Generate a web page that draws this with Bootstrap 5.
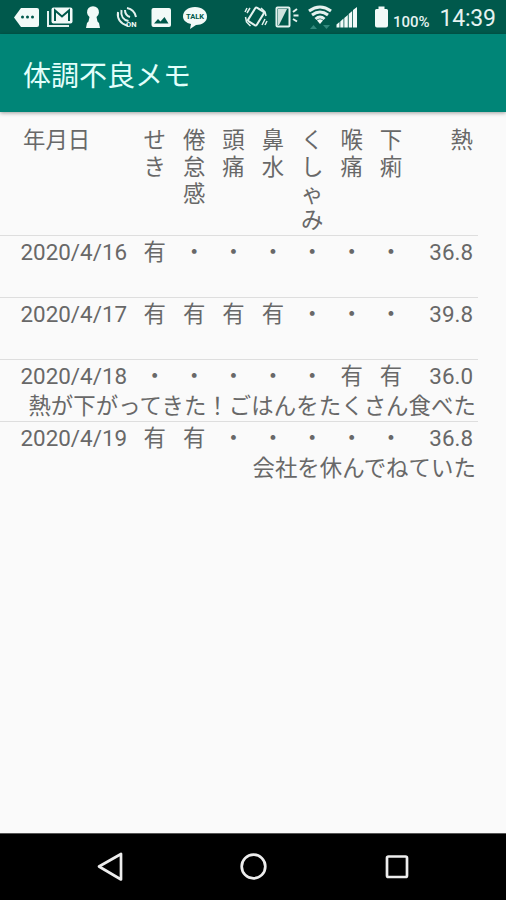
<!DOCTYPE html>
<html lang="ja">
<head>
<meta charset="utf-8">
<meta name="viewport" content="width=device-width, initial-scale=1">
<title>体調不良メモ</title>
<link rel="stylesheet" href="https://cdn.jsdelivr.net/npm/bootstrap@5.3.0/dist/css/bootstrap.min.css">
<style>
  body { font-family: Roboto, "Noto Sans CJK JP", sans-serif; background: #fafafa; color: #686868; height: 900px; overflow: hidden; }
  .status-bar { height: 34px; background: #00594c; color: #e6f3f1; }
  .status-bar svg { height: 34px; flex: none; fill: #f2faf8; stroke: none; }
  .status-bar .ln { fill: none; stroke: #e4f2ef; stroke-width: 2; }
  .status-bar .dk { fill: #00594c; }
  .battery-text { width: 48.5px; padding: 5px 0 0 2px; font-size: 15px; font-weight: 500; line-height: 34px; }
  .clock { padding-top: 2px; font-size: 23px; line-height: 34px; letter-spacing: -.2px; }
  .app-bar { height: 78px; background: #008577; box-shadow: 0 1px 4px rgba(0,0,0,.38); padding-left: 23px; }
  .app-title { font-size: 28px; line-height: 40px; color: #e2fffb; padding-top: 7px; }
  .memo { font-size: 22.4px; width: 478px; line-height: 31px; }
  .memo-row { height: 62px; border-bottom: 1px solid #dedede; }
  .memo-row:last-child { border-bottom: 0; }
  .cells { display: grid; grid-template-columns: 135px repeat(7, 39.4px) 1fr; text-align: center; }
  .cells > :first-child { text-align: left; padding-left: 20.5px; }
  .cells > :last-child { text-align: right; padding-right: 5px; }
  .memo-head { height: 124px; padding-top: 15px; line-height: 26.8px; border-bottom: 1px solid #dedede; }
  .memo-head > :first-child { padding-left: 23px; }
  .stack { width: 1em; margin: 0 auto; word-break: break-all; line-break: anywhere; }
  .memo-row .cells { padding-top: 1px; line-height: 30px; }
  .note { text-align: right; padding-right: 2px; line-height: 30px; letter-spacing: .08px; }
  .nav-keys { height: 67px; background: #000; border-top: 1px solid #555; }
  .nav-keys svg { fill: none; stroke: #ededed; stroke-width: 2.7; }
</style>
<script src="https://cdn.jsdelivr.net/npm/bootstrap@5.3.0/dist/js/bootstrap.bundle.min.js"></script>
</head>
<body class="d-flex flex-column">
<header class="status-bar d-flex flex-shrink-0">
  <svg width="43" viewBox="0 0 43 34"><path d="M21 8h16q2 0 2 2v15q0 2-2 2H21l-7-9.500z"/><g class="dk"><circle cx="22.500" cy="17" r="1.500"/><circle cx="27.500" cy="17" r="1.500"/><circle cx="32.500" cy="17" r="1.500"/></g></svg>
  <svg width="37" viewBox="43 0 37 34"><path class="ln" d="M48 11v15h21"/><rect x="51.500" y="7.500" width="21" height="16" rx="2"/><path d="M55 21V10.500l7 6 7-6V21" fill="none" stroke="#00594c" stroke-width="2"/></svg>
  <svg width="29" viewBox="80 0 29 34"><path d="M89.500 17a6 6 0 1 1 7 0l1 4.500 1.500 1.500 1 5H86l1-5 1.500-1.500z"/></svg>
  <svg width="36" viewBox="109 0 36 34"><g class="ln"><path d="M118 12c-1 7 3 12 10 14M121.500 10c-1 6 2 10 7 11M125 10c0 4 2 6 5 7M127 8c5 1 8 4 9 9"/></g><text x="126" y="27" font-size="7.500" font-weight="700">ON</text></svg>
  <svg width="32" viewBox="145 0 32 34"><rect x="151.500" y="8" width="19.500" height="19" rx="2"/><path class="dk" d="M154 23.500l4-4.500 2.500 2.500 4-4.500 4 6.500z"/></svg>
  <svg width="62" viewBox="177 0 62 34"><path d="M195 7c7 0 12 4 12 9.500S202 25 196 25l-6 4 1-5c-5-1-8-4-8-7.500C183 11 188 7 195 7z"/><text class="dk" x="186" y="19" font-size="7.500" font-weight="700">TALK</text></svg>
  <svg width="32" viewBox="239 0 32 34"><rect class="ln" x="251" y="8.500" width="10" height="16" rx="1.500" transform="rotate(32 256 16.500)"/><g class="ln" style="stroke-width:1.500"><path d="M250 8l-3 5M247 8l-2 4M245.500 17l1 5 4 4M262 25l3-6M265 25l2-4M261 8l4 4 1 4"/></g></svg>
  <svg width="32" viewBox="271 0 32 34"><rect class="ln" x="276.500" y="7.500" width="13" height="19" rx="1"/><path d="M278 9h9l-8 16h-1z" opacity=".85"/><path class="ln" d="M293 12l4-3M293.500 15.500h5M293 19l4 2.500"/></svg>
  <svg width="31" viewBox="303 0 31 34"><g class="ln" style="stroke-width:3"><path d="M309 11q11-8 22 0M312 15q8-6 16 0M315.500 19q4.500-4 9 0"/></g><path d="M317 20.500q3-2.500 6 0l-3 3.500z"/><path d="M310 29l3.500-4 3.500 4zM323 25h7l-3.500 4z" fill="#32897d"/></svg>
  <svg width="33" viewBox="334 0 33 34"><path d="M336.500 27.500v-3l3-2.500v5.500zM340.300 27.500v-6l3.200-3v9zM344.300 27.500V18l3.500-3v12.500zM348.700 27.500V14l3.500-3v16.500zM353 27.500V10l4-3v20.500z"/></svg>
  <svg width="24" viewBox="367 0 24 34"><path d="M378.500 6.500h6v2.500h2q1.500 0 1.500 1.500v15q0 2-2 2h-9q-2 0-2-2v-15q0-1.500 1.500-1.500h2z"/></svg>
  <span class="battery-text">100%</span>
  <span class="clock">14:39</span>
</header>
<nav class="app-bar d-flex align-items-center flex-shrink-0">
  <h1 class="app-title m-0 fw-normal">体調不良メモ</h1>
</nav>
<main class="flex-grow-1">
  <div class="memo">
    <div class="cells memo-head">
      <div>年月日</div>
      <div><div class="stack">せき</div></div>
      <div><div class="stack">倦怠感</div></div>
      <div><div class="stack">頭痛</div></div>
      <div><div class="stack">鼻水</div></div>
      <div><div class="stack">くしゃみ</div></div>
      <div><div class="stack">喉痛</div></div>
      <div><div class="stack">下痢</div></div>
      <div>熱</div>
    </div>
    <div class="memo-row">
      <div class="cells"><span>2020/4/16</span><span>有</span><span>・</span><span>・</span><span>・</span><span>・</span><span>・</span><span>・</span><span>36.8</span></div>
    </div>
    <div class="memo-row">
      <div class="cells"><span>2020/4/17</span><span>有</span><span>有</span><span>有</span><span>有</span><span>・</span><span>・</span><span>・</span><span>39.8</span></div>
    </div>
    <div class="memo-row">
      <div class="cells"><span>2020/4/18</span><span>・</span><span>・</span><span>・</span><span>・</span><span>・</span><span>有</span><span>有</span><span>36.0</span></div>
      <div class="note">熱が下がってきた！ごはんをたくさん食べた</div>
    </div>
    <div class="memo-row">
      <div class="cells"><span>2020/4/19</span><span>有</span><span>有</span><span>・</span><span>・</span><span>・</span><span>・</span><span>・</span><span>36.8</span></div>
      <div class="note">会社を休んでねていた</div>
    </div>
  </div>
</main>
<footer class="nav-keys d-flex justify-content-center align-items-center flex-shrink-0">
  <svg width="143" height="66" viewBox="39 834 143 66"><path d="M99 866.500l22-12.500v25.500z" stroke-linejoin="round"/></svg>
  <svg width="143" height="66" viewBox="182 834 143 66"><circle cx="253.500" cy="866.500" r="11.800"/></svg>
  <svg width="143" height="66" viewBox="325 834 143 66"><rect x="387" y="856.500" width="20" height="20.500" rx="1.500"/></svg>
</footer>
</body>
</html>
